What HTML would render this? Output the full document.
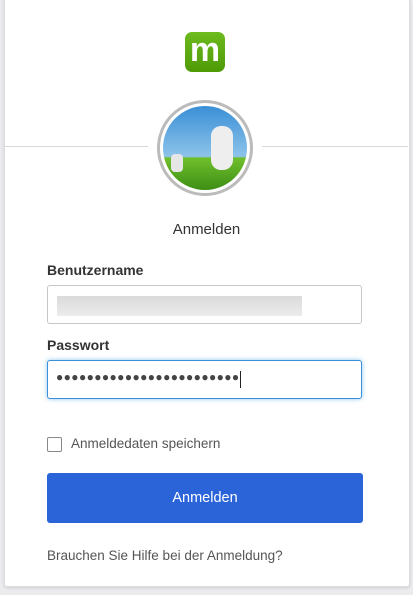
<!DOCTYPE html>
<html><head><style>
body{margin:0;width:413px;height:595px;background:#ececef;font-family:"Liberation Sans",sans-serif;position:relative;overflow:hidden}
.card{position:absolute;left:4px;top:-2px;width:404px;height:587px;background:#fff;border:1px solid #dcdcdf;border-radius:3px;box-shadow:0 1px 3px rgba(0,0,0,.12)}
.abs{position:absolute}
.line{position:absolute;top:146px;height:1px;background:#d8d8d8}
.lbl{position:absolute;left:47px;font-size:14px;color:#333;font-weight:600}
.inp{position:absolute;left:47px;width:313px;height:37px;border:1px solid #c6c6c6;border-radius:3px;background:#fff}
</style></head><body>
<div class="card"></div>
<div class="abs" style="left:185px;top:32px;width:40px;height:40px;border-radius:7px;background:linear-gradient(#6dbb1e,#4e9a06)"></div>
<div class="abs" style="left:185px;top:30px;width:40px;height:40px;color:#fff;font-weight:bold;font-size:34px;text-align:center;line-height:40px">m</div>
<div class="line" style="left:5px;width:143px"></div>
<div class="line" style="left:262px;width:146px"></div>
<div class="abs" style="left:157px;top:100px;width:90px;height:90px;border:3px solid #bbb;border-radius:50%;background:#fff"></div>
<div class="abs" style="left:163px;top:106px;width:84px;height:84px;border-radius:50%;overflow:hidden;background:linear-gradient(#3a8fd6 0%,#8cc3ea 60%,#6fbf2c 62%,#3d8e14 100%)">
<div class="abs" style="left:48px;top:20px;width:22px;height:44px;background:#eee;border-radius:10px"></div>
<div class="abs" style="left:8px;top:48px;width:12px;height:18px;background:#e6e6e6;border-radius:4px"></div>
</div>
<div class="abs" style="left:0;width:413px;top:221px;text-align:center;font-size:15px;color:#333">Anmelden</div>
<div class="lbl" style="top:262px">Benutzername</div>
<div class="inp" style="top:285px"><div class="abs" style="left:9px;top:10px;width:245px;height:20px;background:linear-gradient(#dadada,#ececec)"></div></div>
<div class="lbl" style="top:337px">Passwort</div>
<div class="inp" style="top:360px;border-color:#3b8fd9;box-shadow:0 0 5px rgba(60,160,230,.6)"><div class="abs" style="left:8px;top:9px;font-size:12px;letter-spacing:0.4px;color:#444">●●●●●●●●●●●●●●●●●●●●●●●●</div><div class="abs" style="left:192px;top:10px;width:1px;height:17px;background:#222"></div></div>
<div class="abs" style="left:47px;top:437px;width:13px;height:13px;border:1px solid #888;border-radius:2px"></div>
<div class="abs" style="left:71px;top:436px;font-size:13.5px;color:#555">Anmeldedaten speichern</div>
<div class="abs" style="left:47px;top:473px;width:316px;height:50px;background:#2b64d9;border-radius:3px;color:#fff;font-size:14.5px;text-align:center;line-height:50px">Anmelden</div>
<div class="abs" style="left:47px;top:548px;font-size:13.5px;color:#555">Brauchen Sie Hilfe bei der Anmeldung?</div>
</body></html>
